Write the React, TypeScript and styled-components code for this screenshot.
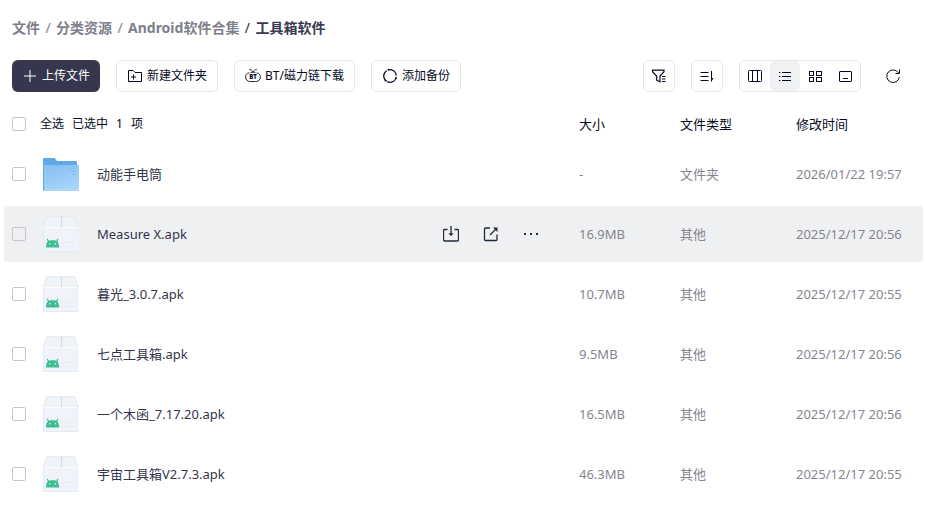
import React from "react";
import styled, { createGlobalStyle, css } from "styled-components";

const GlobalStyle = createGlobalStyle`
  * { box-sizing: border-box; }
  body {
    margin: 0;
    background: #fff;
    color: #050a22;
    font-family: "Noto Sans", "Noto Sans CJK SC", sans-serif;
    font-size: 13px;
    line-height: 20px;
  }
  button, input { font: inherit; color: inherit; margin: 0; }
`;

const Page = styled.main`
  padding: 18px 3px 16px 4px;
`;

const Breadcrumb = styled.nav`
  padding: 0 8px;
  font-size: 14px;
  font-weight: 700;
`;

const CrumbList = styled.ol`
  display: flex;
  margin: 0;
  padding: 0;
  list-style: none;
`;

const Crumb = styled.li<{ $last?: boolean }>`
  white-space: nowrap;

  &:not(:first-child)::before {
    content: "/";
    display: inline-block;
    width: 16px;
    text-align: center;
    font-weight: 400;
    color: ${(p) => (p.$last ? "#2f3042" : "#7e7f8a")};
  }
`;

const CrumbLink = styled.a<{ $current?: boolean }>`
  color: ${(p) => (p.$current ? "#3a3a50" : "#7e7f8a")};
  text-decoration: none;
`;

const Toolbar = styled.div`
  display: flex;
  justify-content: space-between;
  padding: 0 14px 0 8px;
  margin-top: 22px;
`;

const ToolGroup = styled.div`
  display: flex;
  gap: 16px;
`;

const outlined = css`
  border: 1px solid #e4e6ea;
  border-radius: 6px;
  background: #fff;
`;

const ActionButton = styled.button<{ $primary?: boolean }>`
  display: flex;
  align-items: center;
  gap: 4px;
  height: 32px;
  padding: 0 10px;
  font-size: 12px;
  white-space: nowrap;
  cursor: pointer;
  ${outlined}
  ${(p) =>
    p.$primary &&
    css`
      border: 0;
      background: #36364f;
      color: #fff;
    `}
`;

const IconButton = styled.button<{ $plain?: boolean }>`
  display: grid;
  place-items: center;
  width: 32px;
  height: 32px;
  padding: 0;
  cursor: pointer;
  ${outlined}
  ${(p) => p.$plain && "border-color: transparent;"}
`;

const ViewSwitch = styled.div`
  display: flex;
  height: 32px;
  ${outlined}
`;

const ViewButton = styled.button<{ $active?: boolean }>`
  display: grid;
  place-items: center;
  width: 30px;
  padding: 0;
  border: 0;
  border-radius: 5px;
  background: ${(p) => (p.$active ? "#eff1f3" : "transparent")};
  cursor: pointer;
`;

const Glyph = styled.svg`
  display: block;
  width: 16px;
  height: 16px;
  fill: none;
  stroke: currentColor;
  stroke-width: 1;
`;

const BtText = styled.text`
  fill: currentColor;
  stroke: none;
  font: 800 6px "Open Sans", sans-serif;
`;

const FileTable = styled.table`
  width: 100%;
  margin-top: 10px;
  border-collapse: separate;
  border-spacing: 0 4px;
  table-layout: fixed;
`;

const Col = styled.col<{ $width?: number }>`
  ${(p) => p.$width && `width: ${p.$width}px;`}
`;

const HeadCell = styled.th`
  height: 36px;
  padding: 0;
  font-weight: 400;
  text-align: left;
`;

const SelectAll = styled.div`
  display: flex;
  align-items: center;
  gap: 8px;
  padding-left: 8px;
  font-size: 12px;
`;

const SelectLabel = styled.label`
  display: flex;
  align-items: center;
  gap: 14px;
`;

const Tick = styled.input`
  appearance: none;
  display: block;
  width: 14px;
  height: 14px;
  flex: none;
  border: 1px solid #c6c7cc;
  border-radius: 2px;

  &:checked {
    background: #36364f;
  }
`;

const RowActions = styled.div<{ $shown?: boolean }>`
  display: ${(p) => (p.$shown ? "flex" : "none")};
  gap: 16px;
  margin-left: auto;
  padding-right: 36px;
`;

const Row = styled.tr<{ $hovered?: boolean }>`
  & > td {
    height: 56px;
    padding: 0;
    color: #85868f;
    background: ${(p) => (p.$hovered ? "#eff0f2" : "transparent")};
  }
  & > td:first-child {
    padding-left: 8px;
    border-radius: 4px 0 0 4px;
  }
  & > td:last-child {
    border-radius: 0 4px 4px 0;
  }
  &:hover ${RowActions} {
    display: flex;
  }
`;

const NameBox = styled.div`
  display: flex;
  align-items: center;
`;

const FileLink = styled.a`
  margin-left: 18px;
  color: #33344a;
  text-decoration: none;
  white-space: nowrap;
`;

const RowButton = styled.button`
  display: grid;
  place-items: center;
  width: 24px;
  height: 24px;
  padding: 0;
  border: 0;
  background: none;
  color: #26263c;
  cursor: pointer;
`;

const FileArt = styled.svg`
  display: block;
  width: 37px;
  height: 36px;
  flex: none;
`;

const FolderArt = () => (
  <FileArt viewBox="0 0 37 36" aria-hidden="true">
    <defs>
      <linearGradient id="folderFront" x1="0" y1="0" x2="0.4" y2="1">
        <stop offset="0" stopColor="#83bdf1" />
        <stop offset="1" stopColor="#a8d4fa" />
      </linearGradient>
    </defs>
    <path d="M1 3a1 1 0 0 1 1-1h10.500l2.500 3H34a1 1 0 0 1 1 1v28.500H1z" fill="#5fa9e8" />
    <path d="M2.500 9H36a1 1 0 0 1 1 1V34a1 1 0 0 1-1 1H2.500z" fill="url(#folderFront)" />
    <path d="M3 9V33.500H36.500" fill="none" stroke="#b5daf9" strokeWidth=".8" />
    <path d="M27 12.500h7M29 15.500h5M30 18.500h3" stroke="#79b6ee" strokeWidth=".6" />
  </FileArt>
);

const ApkArt = () => (
  <FileArt viewBox="0 0 37 36" aria-hidden="true">
    <path d="M5.500.500h26q1 0 1.500 1L36.500 11v24a1 1 0 0 1-1 1H2a1 1 0 0 1-1-1V11L4 1.500q.4-1 1.500-1z" fill="#f0f3f8" />
    <path d="M1 11.500h35.500V35a1 1 0 0 1-1 1H2a1 1 0 0 1-1-1z" fill="#f0f4fa" />
    <path d="M1.500 11L4.300 1.500q.3-.8 1.200-.8h26q.9 0 1.300.8L36 11" fill="none" stroke="#dde6eb" strokeWidth=".8" />
    <path d="M1 11.500h35.500" stroke="#fafcfe" />
    <path d="M1.400 12v23.600H36" fill="none" stroke="#dce7ef" strokeWidth=".8" />
    <path d="M19.500 1v10" stroke="#c9dde5" />
    <path d="M18 26.500h14M16 30.500h18" stroke="#e5ebf2" strokeWidth=".8" />
    <path d="M4 31.500c0-3.200.5-5 1.900-6L4.700 23l.9-.4 1.400 2.100c2-.5 5.200-.5 7.200 0l1.400-2.100.9.4-1.200 2.500c1.300 1 1.700 2.800 1.700 6z" fill="#3dbd91" />
    <circle cx="7.900" cy="27.800" r=".8" fill="#e9faf4" />
    <circle cx="13.300" cy="27.800" r=".8" fill="#e9faf4" />
  </FileArt>
);

const PlusIcon = () => (
  <Glyph viewBox="0 0 16 16" aria-hidden="true"><path d="M8 2v12M2 8h12" /></Glyph>
);

const NewFolderIcon = () => (
  <Glyph viewBox="0 0 16 16" aria-hidden="true">
    <path d="M1.500 2.500h4.500l2 2h6.500v9h-13zM6.500 6.500v5M4 9h5" />
  </Glyph>
);

const BtIcon = () => (
  <Glyph viewBox="0 0 16 16" aria-hidden="true">
    <path d="M4.300 4.800C1.800 5.200.6 6.900.6 9c0 3 2 4.500 4.800 4.500h5.200c2.800 0 4.800-1.500 4.800-4.500 0-2.100-1.200-3.800-3.700-4.200M5.500 4.600c1.500-.5 3.500-.5 5 0" strokeWidth=".9" />
    <path d="M4.200 1.600c1.800-.2 3.200.8 3.800 2.400.6-1.600 2-2.600 3.800-2.400" strokeWidth=".9" />
    <BtText x="8" y="11.200" textAnchor="middle">BT</BtText>
  </Glyph>
);

const BackupIcon = () => (
  <Glyph viewBox="0 0 16 16" aria-hidden="true">
    <circle cx="8" cy="8" r="6.300" pathLength="120" strokeDasharray="36 4" strokeDashoffset="-3" strokeWidth="1.200" />
    <path d="M2.600 12.700h2.200M14.500 9.600l-1.100 1.900M5.900 1.200l1 1.200" strokeWidth="1.200" />
  </Glyph>
);

const FilterIcon = () => (
  <Glyph viewBox="0 0 16 16" aria-hidden="true">
    <path d="M1.500 2.200h11.500v1.500L9 8v5.800l-3.300-1.600V8L1.500 3.700z" strokeWidth="1.200" />
    <path d="M11 8.500h3.500M11 11h3.500M11 13.500h3.500" />
  </Glyph>
);

const SortIcon = () => (
  <Glyph viewBox="0 0 16 16" aria-hidden="true">
    <path d="M1.500 4.500h8M1.500 8.500h8M1.500 12.500h8M12.500 3v10.500" />
    <path d="M12.500 13.500v-3.500h2z" fill="currentColor" stroke="none" />
  </Glyph>
);

const ColumnsIcon = () => (
  <Glyph viewBox="0 0 16 16" aria-hidden="true">
    <rect x="1.500" y="2.500" width="13" height="11" rx="1" /><path d="M5.500 2.500v11M10.500 2.500v11" />
  </Glyph>
);

const ListIcon = () => (
  <Glyph viewBox="0 0 16 16" aria-hidden="true">
    <path d="M5 4.500h9M5 8.500h9M5 12.500h9M2 4.500h1.300M2 8.500h1.300M2 12.500h1.300" />
  </Glyph>
);

const GridIcon = () => (
  <Glyph viewBox="0 0 16 16" aria-hidden="true">
    <rect x="2.500" y="3.500" width="4" height="4" /><rect x="9.500" y="3.500" width="5" height="4" />
    <rect x="2.500" y="9.500" width="4" height="4" /><rect x="9.500" y="9.500" width="5" height="4" />
  </Glyph>
);

const PreviewIcon = () => (
  <Glyph viewBox="0 0 16 16" aria-hidden="true">
    <rect x="2.500" y="3.500" width="12" height="10" rx=".5" /><path d="M6 10.500h5" />
  </Glyph>
);

const RefreshIcon = () => (
  <Glyph viewBox="0 0 16 16" aria-hidden="true">
    <path d="M14.300 9.200A6.300 6.300 0 1 1 13.500 5M14.500 1.500v4h-4" />
  </Glyph>
);

const DownloadIcon = () => (
  <Glyph viewBox="0 0 16 16" aria-hidden="true">
    <path d="M4.500 3.500H1.500q-1 0-1 1V14q0 1 1 1h13q1 0 1-1V4.500q0-1-1-1h-3M8 0v8" strokeWidth="1.300" />
    <path d="M5.500 7.200h5L8 10.200z" fill="currentColor" stroke="none" />
  </Glyph>
);

const ShareIcon = () => (
  <Glyph viewBox="0 0 16 16" aria-hidden="true">
    <path d="M7 2H2.500q-1 0-1 1v10.500q0 1 1 1h10.500q1 0 1-1V8.500M7 9l6-6" strokeWidth="1.300" />
    <path d="M10 1.500h4.500V6z" fill="currentColor" stroke="none" />
  </Glyph>
);

const MoreIcon = () => (
  <Glyph viewBox="0 0 16 16" aria-hidden="true">
    <path d="M1 7h2v2H1zM7 7h2v2H7zM13 7h2v2h-2z" fill="currentColor" stroke="none" />
  </Glyph>
);

const crumbs = ["文件", "分类资源", "Android软件合集", "工具箱软件"];

const actions = [
  { label: "上传文件", Icon: PlusIcon, primary: true },
  { label: "新建文件夹", Icon: NewFolderIcon },
  { label: "BT/磁力链下载", Icon: BtIcon },
  { label: "添加备份", Icon: BackupIcon },
];

const views = [
  { label: "分栏", Icon: ColumnsIcon },
  { label: "列表", Icon: ListIcon, active: true },
  { label: "网格", Icon: GridIcon },
  { label: "预览", Icon: PreviewIcon },
];

const files = [
  { name: "动能手电筒", size: "-", type: "文件夹", time: "2026/01/22 19:57", folder: true },
  { name: "Measure X.apk", size: "16.9MB", type: "其他", time: "2025/12/17 20:56", hovered: true },
  { name: "暮光_3.0.7.apk", size: "10.7MB", type: "其他", time: "2025/12/17 20:55" },
  { name: "七点工具箱.apk", size: "9.5MB", type: "其他", time: "2025/12/17 20:56" },
  { name: "一个木函_7.17.20.apk", size: "16.5MB", type: "其他", time: "2025/12/17 20:56" },
  { name: "宇宙工具箱V2.7.3.apk", size: "46.3MB", type: "其他", time: "2025/12/17 20:55" },
];

export default function App() {
  return (
    <Page>
      <GlobalStyle />
      <Breadcrumb>
        <CrumbList>
          {crumbs.map((name, i) => {
            const last = i === crumbs.length - 1;
            return (
              <Crumb key={name} $last={last}>
                <CrumbLink href="#" $current={last}>{name}</CrumbLink>
              </Crumb>
            );
          })}
        </CrumbList>
      </Breadcrumb>

      <Toolbar>
        <ToolGroup>
          {actions.map(({ label, Icon, primary }) => (
            <ActionButton key={label} type="button" $primary={primary}>
              <Icon />
              {label}
            </ActionButton>
          ))}
        </ToolGroup>
        <ToolGroup>
          <IconButton type="button" aria-label="筛选"><FilterIcon /></IconButton>
          <IconButton type="button" aria-label="排序"><SortIcon /></IconButton>
          <ViewSwitch>
            {views.map(({ label, Icon, active }) => (
              <ViewButton key={label} type="button" aria-label={label} aria-pressed={!!active} $active={active}>
                <Icon />
              </ViewButton>
            ))}
          </ViewSwitch>
          <IconButton type="button" aria-label="刷新" $plain><RefreshIcon /></IconButton>
        </ToolGroup>
      </Toolbar>

      <FileTable>
        <colgroup>
          <Col $width={38} />
          <Col />
          <Col $width={101} />
          <Col $width={116} />
          <Col $width={127} />
        </colgroup>
        <thead>
          <tr>
            <HeadCell colSpan={2}>
              <SelectAll>
                <SelectLabel><Tick type="checkbox" />全选</SelectLabel>
                <span>已选中</span>
                <span>1</span>
                <span>项</span>
              </SelectAll>
            </HeadCell>
            <HeadCell>大小</HeadCell>
            <HeadCell>文件类型</HeadCell>
            <HeadCell>修改时间</HeadCell>
          </tr>
        </thead>
        <tbody>
          {files.map((f) => (
            <Row key={f.name} $hovered={f.hovered}>
              <td><Tick type="checkbox" aria-label={f.name} /></td>
              <td>
                <NameBox>
                  {f.folder ? <FolderArt /> : <ApkArt />}
                  <FileLink href="#">{f.name}</FileLink>
                  <RowActions $shown={f.hovered}>
                    <RowButton type="button" aria-label="下载"><DownloadIcon /></RowButton>
                    <RowButton type="button" aria-label="分享"><ShareIcon /></RowButton>
                    <RowButton type="button" aria-label="更多"><MoreIcon /></RowButton>
                  </RowActions>
                </NameBox>
              </td>
              <td>{f.size}</td>
              <td>{f.type}</td>
              <td>{f.time}</td>
            </Row>
          ))}
        </tbody>
      </FileTable>
    </Page>
  );
}
